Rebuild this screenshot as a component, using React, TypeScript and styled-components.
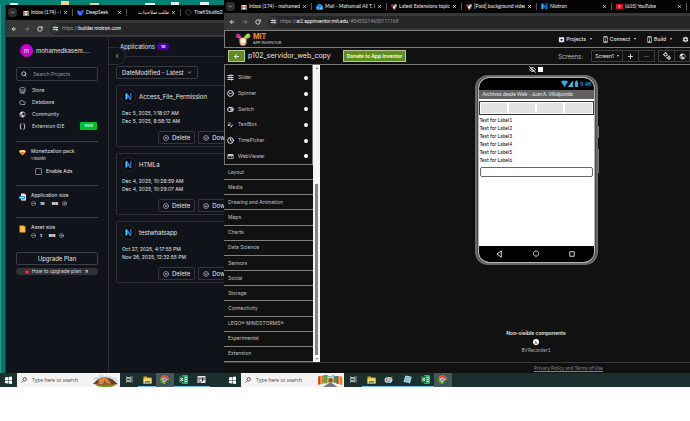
import React from "react";
import styled, { createGlobalStyle } from "styled-components";
import {
  ArrowLeft, ArrowRight, RotateCw, Search, Store, Cloud, Braces, ChevronLeft, ChevronDown, X,
  CircleX, CircleArrowDown, CircleMinus, CirclePlus, ArrowUpRight, SlidersHorizontal, CircleChevronDown,
  ToggleRight, Clock, Plus, Minus, EyeOff,
} from "lucide-react";
import { MdPublic, MdSettings, MdArchive, MdEditNote, MdWeb, MdPermDeviceInformation } from "react-icons/md";

const Global = createGlobalStyle`
  *, *::before, *::after { box-sizing: border-box; }
  body { margin: 0; background: #fff; overflow-x: hidden; }
  button, input, select { font: inherit; color: inherit; margin: 0; padding: 0; border: 0; background: none; }
  button { cursor: pointer; }
  svg { display: block; flex: none; }
`;

const ui = `"Inter", "Open Sans", sans-serif`;
const system = `"Open Sans", "Noto Sans", sans-serif`;
const compact = `Lato, Roboto, sans-serif`;

const Screen = styled.div`
  display: grid;
  grid-template-columns: minmax(0, 224fr) minmax(0, 466fr);
  font: 5px/7px ${ui};
  color: #e6e6e6;
  white-space: nowrap;
`;
const Desktop = styled.section`
  display: flex;
  flex-direction: column;
  min-width: 0;
  overflow: hidden;
  background: #007f71;
`;
const Shortcuts = styled.svg`
  width: 100%;
  height: 5px;
`;
const DesktopBody = styled.div`
  flex: 1;
  display: grid;
  grid-template-columns: 6px minmax(0, 1fr);
`;
const DesktopEdge = styled.div`
  background: linear-gradient(90deg, #37998e 0 1px, #00786b 1px 5px, #07443f 5px);
`;
const Browser = styled.div`
  flex: 1;
  display: flex;
  flex-direction: column;
  min-width: 0;
  background: #111;
  overflow: hidden;
`;

/* browser chrome */
const TabStrip = styled.div<{ $h: number }>`
  height: ${(p) => p.$h}px;
  display: flex;
  align-items: center;
  background: #030303;
  overflow: hidden;
  font-family: ${compact};
  color: #f2f2f2;
`;
const TabMenu = styled.button`
  flex: none;
  width: 9px;
  height: 9px;
  margin: 0 2px;
  border-radius: 3px;
  background: #2d2d2d;
  display: grid;
  place-items: center;
`;
const Tab = styled.div<{ $w: number }>`
  flex: 0 0 ${(p) => p.$w}px;
  min-width: 0;
  display: flex;
  align-items: center;
  gap: 2px;
  padding: 0 4px;
`;
const TabTitle = styled.span`
  flex: 1;
  min-width: 0;
  overflow: hidden;
`;
const TabClose = styled.button`
  display: grid;
  place-items: center;
`;
const Toolbar = styled.div`
  height: 17px;
  display: flex;
  align-items: center;
  gap: 7px;
  padding: 0 0 0 5px;
  background: #363738;
  color: #ddd;
`;
const NavButton = styled.button<{ $dim?: boolean }>`
  color: ${(p) => (p.$dim ? "#888" : "#fff")};
`;
const Address = styled.label`
  flex: 1;
  min-width: 0;
  height: 12px;
  display: flex;
  align-items: center;
  overflow: hidden;
  border-radius: 6px 0 0 6px;
  background: #242628;
  color: #999;
  font-family: Roboto, sans-serif;
  input { color: #fff; field-sizing: content; outline: 0; }
`;
const SiteInfo = styled.span`
  width: 9px;
  height: 9px;
  margin: 0 2px 0 1px;
  border-radius: 50%;
  background: #38393a;
  display: grid;
  place-items: center;
`;

/* builder */
const Builder = styled.div`
  flex: 1;
  display: grid;
  grid-template-columns: 103px minmax(0, 1fr);
  background: #10131a;
`;
const Sidebar = styled.aside`
  border-right: 1px solid #2c2e34;
  padding: 7px 10px 0;
  display: flex;
  flex-direction: column;
`;
const Account = styled.div`
  display: flex;
  align-items: center;
  gap: 3px;
  padding: 0 4px;
  font-size: 6px;
  line-height: 13px;
`;
const Avatar = styled.span`
  width: 13px;
  height: 13px;
  border-radius: 50%;
  background: #c800d0;
  text-align: center;
`;
const SearchField = styled.label`
  display: flex;
  align-items: center;
  gap: 6px;
  height: 14px;
  margin: 10px 0 3px;
  padding: 0 4px;
  border: 1px solid #373a40;
  border-radius: 2px;
  input { width: 100%; min-width: 0; outline: 0; }
  input::placeholder { color: #92959a; opacity: 1; }
`;
const SideLinks = styled.nav`
  padding-bottom: 9px;
`;
const SideLink = styled.a`
  display: flex;
  align-items: center;
  gap: 6px;
  height: 12px;
  padding: 0 1px 0 3px;
  color: #dcdcdc;
  text-decoration: none;
`;
const NewTag = styled.span`
  margin-left: auto;
  padding: 0 4px;
  border-radius: 1px;
  background: #00c22f;
  color: #fff;
  font-size: 4px;
  line-height: 8px;
`;
const Plan = styled.section<{ $h: number }>`
  height: ${(p) => p.$h}px;
  border-top: 1px solid #3d4047;
  padding: 6px 3px 0;
  display: grid;
  grid-template-columns: 7px 1fr;
  column-gap: 5px;
  align-content: start;
  > svg { margin-top: 1px; grid-row: span 2; }
`;
const PlanNote = styled.span`
  grid-column: 2;
  font-size: 4px;
`;
const Check = styled.label`
  grid-column: 2;
  display: flex;
  align-items: center;
  gap: 4px;
  margin: 6px 0 0 4px;
  input {
    appearance: none;
    width: 7px;
    height: 7px;
    border: 1px solid #777b82;
    border-radius: 1px;
  }
`;
const Stepper = styled.div`
  grid-column: 2;
  display: flex;
  align-items: center;
  gap: 4px;
  margin-top: 1px;
  font-size: 4px;
  font-weight: 700;
  b:last-of-type { margin-left: 3px; }
`;
const Upgrade = styled.button`
  height: 13px;
  margin-top: 3px;
  border: 1px solid #3b3e45;
  border-radius: 2px;
  font-size: 6px;
`;
const HowTo = styled.a`
  display: flex;
  align-items: center;
  justify-content: center;
  gap: 3px;
  height: 7px;
  margin-top: 3px;
  border-radius: 4px;
  background: #303236;
  color: #ddd;
  text-decoration: none;
`;
const Main = styled.main`
  position: relative;
  min-width: 0;
  overflow: hidden;
  padding: 0 0 0 7px;
`;
const MainHead = styled.header`
  height: 20px;
  margin-left: -7px;
  padding: 6px 0 0 11px;
  border-bottom: 1px solid #2c2e34;
  display: flex;
  align-items: flex-start;
  gap: 2px;
  font-size: 6px;
`;
const Count = styled.span`
  padding: 0 4px;
  border-radius: 4px;
  background: #4900b0;
  color: #fff;
  font-size: 4px;
  font-weight: 700;
`;
const Collapse = styled.button`
  position: absolute;
  left: -1px;
  top: 10px;
  width: 18px;
  height: 18px;
  border: 1px solid #2c2e34;
  border-left: 0;
  border-radius: 0 9px 9px 0;
  background: #10131a;
  display: grid;
  place-items: center;
`;
const Sort = styled.label`
  display: flex;
  align-items: center;
  width: 82px;
  height: 13px;
  margin-top: 9px;
  padding: 0 5px;
  border: 1px solid #373a40;
  border-radius: 2px;
  font-size: 6px;
  select { appearance: none; flex: 1; min-width: 0; height: 11px; outline: 0; }
`;
const Card = styled.article`
  height: 62px;
  margin: 6px 0;
  padding: 3px 0 2px 4px;
  border: 1px solid #2c2e34;
  border-right: 0;
  border-radius: 2px 0 0 2px;
  display: flex;
  flex-direction: column;
`;
const CardHead = styled.h3`
  display: flex;
  align-items: center;
  gap: 3px;
  margin: 0 0 5px;
  font-size: 6px;
  font-weight: 400;
`;
const CardDate = styled.span`
  padding-left: 1px;
  line-height: 8px;
`;
const CardActions = styled.div`
  display: flex;
  gap: 3px;
  margin: auto 0 0 37px;
`;
const CardButton = styled.button<{ $open?: boolean }>`
  flex: none;
  display: flex;
  align-items: center;
  gap: 3px;
  height: 13px;
  padding: 0 ${(p) => (p.$open ? 0 : 4)}px 0 4px;
  border: 1px solid #34363c;
  border-right-width: ${(p) => (p.$open ? 0 : 1)}px;
  border-radius: 2px;
  font-size: 6px;
`;

/* app inventor */
const Inventor = styled.div`
  flex: 1;
  display: flex;
  flex-direction: column;
  background: #111;
`;
const TopBar = styled.header`
  display: flex;
  align-items: center;
  height: 18px;
  padding: 0 1px 0 10px;
  border: 1px solid #7d7d7d;
  border-right: 0;
`;
const Logo = styled.div`
  display: flex;
  align-items: center;
  gap: 2px;
  margin-right: auto;
`;
const LogoText = styled.div`
  display: flex;
  flex-direction: column;
  font: 700 7px/6px ${ui};
  color: #f79428;
  small { font: 400 4px/5px ${compact}; color: #ccc; }
`;
const MenuButton = styled.button`
  display: flex;
  align-items: center;
  gap: 1px;
  margin-right: 10px;
  font-weight: 500;
`;
const Caret = styled.i<{ $up?: boolean; $dark?: boolean }>`
  margin-left: ${(p) => (p.$dark ? 0 : 3)}px;
  border: 1px solid transparent;
  border-top: 2px solid ${(p) => (p.$dark ? "#555" : "#ddd")};
  border-bottom: 0;
  transform: ${(p) => (p.$up ? "rotate(180deg)" : "none")};
`;
const ProjectBar = styled.div`
  display: flex;
  align-items: center;
  height: 17px;
  padding-left: 4px;
  border-bottom: 1px solid #777;
`;
const GreenButton = styled.button<{ $pad: number }>`
  height: 12px;
  padding: 0 ${(p) => p.$pad}px;
  border: 1px solid #b9c79d;
  background: #5f8e1c;
  color: #fff;
  font-weight: 600;
`;
const ProjectName = styled.h1`
  margin: 0 12px 0 3px;
  font: 400 7px/10px ${ui};
`;
const ScreensLabel = styled.span`
  margin: 0 8px 0 auto;
  font-size: 6px;
  color: #bbb;
`;
const Group = styled.div`
  display: flex;
  height: 12px;
  margin-right: 3px;
  &:last-child { margin-right: 0; }
`;
const GroupButton = styled.button<{ $w: number }>`
  width: ${(p) => p.$w}px;
  border: 1px solid #3c3c3c;
  border-left-width: 0;
  display: flex;
  align-items: center;
  justify-content: center;
  &:first-child { border-left-width: 1px; }
`;
const Workspace = styled.div`
  display: grid;
  grid-template-columns: 89px 7px minmax(0, 1fr);
  min-height: 298px;
  border-bottom: 1px solid #383838;
`;
const Palette = styled.nav`
  display: flex;
  flex-direction: column;
  color: #c4c4c4;
`;
const Components = styled.div`
  height: 100px;
  padding: 5px 4px 0 2px;
  border: 1px solid #777;
  border-top: 0;
  display: flex;
  flex-direction: column;
`;
const ComponentItem = styled.button`
  flex: 1;
  display: flex;
  align-items: center;
  gap: 4px;
  svg { color: #fff; }
`;
const Help = styled.span`
  width: 4px;
  height: 4px;
  margin-left: auto;
  border-radius: 50%;
  background: #fff;
`;
const Category = styled.button`
  flex: 1;
  padding-left: 4px;
  border-bottom: 1px solid #808080;
  text-align: left;
`;
const Scroll = styled.div`
  background: #f4f4f4;
  display: flex;
  flex-direction: column;
  align-items: center;
  padding: 2px 0;
`;
const Thumb = styled.div`
  width: 3px;
  height: 171px;
  margin: auto 0 3px;
  background: #858585;
`;
const Viewer = styled.div`
  display: flex;
  flex-direction: column;
  align-items: center;
  padding-left: 62px;
`;
const ViewerTools = styled.div`
  display: flex;
  align-items: center;
  gap: 2px;
  height: 9px;
  margin-bottom: 1px;
`;
const Blank = styled.input`
  appearance: none;
  width: 5px;
  height: 5px;
  && { background: #fff; }
`;
const Phone = styled.div`
  position: relative;
  width: 123px;
  height: 190px;
  padding: 0 1px;
  border: 2px solid #6a6a6a;
  border-radius: 13px;
  background: #4a4a4a;
`;
const SideKey = styled.i<{ $top: number; $h: number }>`
  position: absolute;
  right: -3px;
  top: ${(p) => p.$top}px;
  width: 1px;
  height: ${(p) => p.$h}px;
  background: #777;
`;
const PhoneScreen = styled.div`
  height: 100%;
  display: flex;
  flex-direction: column;
  overflow: hidden;
  border: 1px solid #b5b5b5;
  border-radius: 11px;
  background: #fff;
  color: #000;
`;
const Status = styled.div`
  height: 12px;
  display: flex;
  align-items: center;
  justify-content: flex-end;
  gap: 2px;
  padding-right: 2px;
  background: #000;
  color: #35b0e0;
  font: 6px/8px Roboto, sans-serif;
`;
const AppTitle = styled.div`
  height: 9px;
  padding-left: 4px;
  background: #626262;
  color: #eee;
  font-family: ${compact};
  line-height: 9px;
`;
const ButtonRow = styled.div`
  display: grid;
  grid-template-columns: repeat(4, 1fr);
  gap: 2px;
  height: 14px;
  margin: 2px 0 1px;
  padding: 1px;
  border: 1px solid #333;
  button { background: #e2e2e2; }
`;
const AppLabel = styled.span`
  padding-left: 1px;
  font: 5px/8px ${compact};
`;
const AppInput = styled.input`
  height: 10px;
  margin: 3px 1px;
  border-radius: 2px;
  && { border: 1px solid #666; }
`;
const AndroidNav = styled.div`
  display: flex;
  align-items: center;
  justify-content: space-around;
  height: 16px;
  margin-top: auto;
  padding: 0 4px;
  background: #000;
`;
const Hidden = styled.div`
  display: flex;
  flex-direction: column;
  align-items: center;
  gap: 2px;
  margin-top: auto;
  padding-bottom: 8px;
  strong { font-weight: 600; }
  span { color: #aaa; font-family: ${compact}; }
`;
const Footer = styled.footer`
  height: 10px;
  padding: 2px 0 0 223px;
  text-align: center;
  font-family: ${compact};
  a { color: #858585; }
`;

/* taskbar */
const Taskbar = styled.div`
  height: 14px;
  display: flex;
  align-items: stretch;
  padding-left: 5px;
  background: #19302f;
`;
const TaskButton = styled.button<{ $open?: boolean; $active?: boolean }>`
  flex: none;
  width: 18px;
  display: grid;
  place-items: center;
  background: ${(p) => (p.$active ? "#44585a" : "none")};
  border-bottom: 1px solid ${(p) => (p.$open ? "#76b9ed" : "transparent")};
`;
const TaskSearch = styled.label`
  display: flex;
  align-items: center;
  width: 103px;
  gap: 5px;
  padding: 0 1px 0 4px;
  background: #f3f3f3;
  color: #333;
  font-family: ${system};
  input { flex: 1; min-width: 0; outline: 0; }
  input::placeholder { color: #444; opacity: 1; }
`;
const StartButton = styled.button`
  flex: none;
  margin-right: 5px;
`;

/* drawings */
const Gmail = () => (
  <svg width="6" height="6" viewBox="0 0 12 12">
    <path d="M0 2h12v9H0z" fill="#fff" />
    <path d="M0 11V1l6 5 6-5v10H9V6L6 8 3 6v5z" fill="#ea4335" />
    <path d="M0 4v7h3V6z" fill="#4285f4" /><path d="M12 4v7H9V6z" fill="#34a853" />
  </svg>
);
const DeepSeek = () => (
  <svg width="7" height="7" viewBox="0 0 12 12">
    <path d="M1 2c-2 5 1 9 5 9 2 0 3 0 4-1L8 8c2-1 3-3 4-6-2 1-3 0-4-1 0 2 0 3-1 4C5 3 3 3 1 2z" fill="#426cff" />
  </svg>
);
const Niotron = ({ size = 7 }: { size?: number }) => (
  <svg width={size} height={size} viewBox="0 0 14 14">
    <path d="M1 1l4 2v8l-4 2z" fill="#3dc3ff" /><path d="M1 1h3l9 12h-3z" fill="#1689ee" />
    <path d="M9 1l4-1v13L9 8z" fill="#1668d8" />
  </svg>
);
const NiotronBadge = () => (
  <svg width="15" height="15" viewBox="0 0 30 30">
    <circle cx="15" cy="15" r="14" fill="#0a0b0f" stroke="#33353b" strokeWidth="1.5" />
    <path d="M9 8l4 3v8l-4 3z" fill="#4fd0ff" /><path d="M9 8h3l9 14h-3z" fill="#2b9cf2" />
    <path d="M18 9l3-2v15l-3-5z" fill="#1668d8" />
  </svg>
);
const OutlookMail = () => (
  <svg width="7" height="7" viewBox="0 0 14 14">
    <path d="M2 5l5-4 6 4v8H2z" fill="#1490df" /><path d="M2 6l6 4 5-4v7H2z" fill="#50d0ff" />
    <path d="M0 6h7v7H0z" fill="#0a5cc0" /><circle cx="3.500" cy="9.500" r="1.800" fill="none" stroke="#fff" />
  </svg>
);
const Community = () => (
  <svg width="6" height="6" viewBox="0 0 12 12">
    <circle cx="3" cy="3" r="3" fill="#b01b86" /><circle cx="9" cy="3" r="3" fill="#a5cf42" />
    <path d="M3 6h7l-2 5H5z" fill="#f8a23c" /><circle cx="6" cy="6" r="2" fill="#fff" />
  </svg>
);
const YouTube = ({ size = 7 }: { size?: number }) => (
  <svg width={size} height={size} viewBox="0 0 14 14">
    <rect y="2" width="14" height="10" rx="2" fill="#f20d26" /><path d="M5.500 4.500v5l4-2.500z" fill="#fff" />
  </svg>
);
const DottedRing = () => (
  <svg width="7" height="7" viewBox="0 0 14 14"><circle cx="7" cy="7" r="5" fill="none" stroke="#8b8b8b" strokeWidth="1.500" strokeDasharray="2 1" /></svg>
);
const Tune = () => (
  <svg width="5" height="5" viewBox="0 0 10 10" stroke="#fff" strokeWidth="1.500" fill="none">
    <path d="M0 3h3M6 3h4M0 7h5M8 7h2" /><circle cx="4" cy="3" r="1.300" /><circle cx="7" cy="7" r="1.300" />
  </svg>
);
const Gears = () => (
  <svg width="8" height="8" viewBox="0 0 16 16" fill="none" stroke="#fff">
    <circle cx="5" cy="5" r="3" strokeWidth="2" /><circle cx="12" cy="12" r="2.500" strokeWidth="2" />
    <path d="M5 0v2M0 5h2M9 7l1 2M12 7v2M6 12h2" strokeWidth="1.500" />
  </svg>
);
const Bee = () => (
  <svg width="16" height="13" viewBox="0 0 48 40">
    <path d="M23 17C16 1 5-2 2 6s7 13 19 13z" fill="#a71d85" /><path d="M25 17C32 1 43-2 46 6s-7 13-19 13z" fill="#97c93d" />
    <path d="M9 3l5 12M3 10l15 6" stroke="#d66dbb" strokeWidth="2" /><path d="M39 3l-5 12M45 10l-15 6" stroke="#d2ed8b" strokeWidth="2" />
    <path d="M13 19c3-6 19-6 22 0v10c-2 14-20 14-22 0z" fill="#f0933a" />
    <circle cx="24" cy="23" r="8" fill="#fff3e4" /><path d="M15 30h18M17 35h14" stroke="#fff" strokeWidth="2" />
  </svg>
);
const Gem = () => (
  <svg width="7" height="7" viewBox="0 0 14 14"><path d="M3 2h8l3 4-7 7-7-7z" fill="#f6a13a" /><path d="M3 2h8l3 4H0z" fill="#ffd792" /><path d="M5 6h4l-2 6z" fill="#e36e22" /></svg>
);
const AppBox = () => (
  <svg width="7" height="8" viewBox="0 0 14 16"><path d="M4 1h7l3 3v11H4z" fill="#e8eef5" /><path d="M11 1l3 3h-3z" fill="#f5a33a" /><rect y="6" width="12" height="6" rx="1" fill="#2492ea" /><path d="M2 9h8" stroke="#fff" strokeWidth="2" /><path d="M6 13h7v2H6z" fill="#f08a43" /></svg>
);
const AssetBox = () => (
  <svg width="7" height="8" viewBox="0 0 14 16"><path d="M1 1h9l3 3v11H1z" fill="#f9a91e" /><path d="M3 3h6l2 3v7H3z" fill="#ffc24a" /></svg>
);
const Windows = () => (
  <svg width="7" height="14" viewBox="0 0 14 28"><path d="M0 9l6-1v6H0zM7 8l7-1v7H7zM0 15h6v6l-6-1zM7 15h7v7l-7-1z" fill="#fff" /></svg>
);
const TaskLens = () => (
  <svg width="6" height="6" viewBox="0 0 12 12" fill="none" stroke="#333" strokeWidth="1.500"><circle cx="7.500" cy="4.500" r="3.500" /><path d="M5 7l-4 4" /></svg>
);
const Hill = () => (
  <svg width="27" height="13" viewBox="0 0 81 39">
    <path d="M3 17c0-9 8-12 14-8 4-9 17-8 21-1 6-6 20-5 24 3 12-2 17 4 15 12z" fill="#cfdfe8" />
    <ellipse cx="41" cy="33" rx="29" ry="6" fill="#5b9f27" />
    <path d="M2 29c9-4 16-16 24-18l12-2 14 4c8 1 16 12 27 17-18 5-56 5-77-1z" fill="#9d5c26" />
    <path d="M26 11l12-2 8 8 10 13-13-4-5-9-6 13-17 1z" fill="#d08b4c" /><path d="M15 18L5 29l17-1z" fill="#673517" />
    <path d="M49 12l10 18 17-1-14-12z" fill="#6f3d1a" />
  </svg>
);
const Festival = () => (
  <svg width="25" height="13" viewBox="0 0 75 39">
    <path d="M0 8l19-4v24l-19 5z" fill="#ed7730" /><path d="M53 5l20 3v25l-20-5z" fill="#ef7b27" />
    <path d="M4 7v24M58 7v22" stroke="#c43d27" strokeWidth="4" /><path d="M10 8v20M65 8v22" stroke="#f5b547" strokeWidth="3" />
    <path d="M18 3h11v25H18z" fill="#59a64c" /><path d="M47 6h10v20H47z" fill="#438e7b" />
    <path d="M27 12h22l-3 15H30z" fill="#d8a33e" /><circle cx="38" cy="19" r="6" fill="#ad422b" />
    <path d="M15 39l22-14 22 14z" fill="#77788d" /><path d="M27 5l9 5 12-6" fill="none" stroke="#51a9ce" strokeWidth="3" />
  </svg>
);
const TaskView = () => (
  <svg width="7" height="7" viewBox="0 0 14 14" fill="none" stroke="#d4dddd" strokeWidth="1.500"><path d="M1 1v2h8V1M1 13v-2h8v2M1 5h8v4H1zM12 1v12" /></svg>
);
const Folder = () => (
  <svg width="9" height="8" viewBox="0 0 18 16"><path d="M1 1h6l2 2h8v12H1z" fill="#e9a820" /><path d="M1 5h16v10H1z" fill="#ffd968" /><path d="M4 10h10v5h-3v-2H7v2H4z" fill="#2c91d4" /></svg>
);
const Chrome = () => (
  <svg width="10" height="10" viewBox="0 0 20 20">
    <circle cx="9" cy="9" r="8" fill="#fbbc05" /><path d="M9 9L2 5a8 8 0 0 1 15 4z" fill="#ea4335" /><path d="M2 5l7 12A8 8 0 0 1 2 5z" fill="#34a853" />
    <circle cx="9" cy="9" r="4" fill="#fff" /><circle cx="9" cy="9" r="3" fill="#4285f4" /><circle cx="15" cy="15" r="4.500" fill="#174f60" /><path d="M12 15h6" stroke="#74b5b0" />
  </svg>
);
const Excel = () => (
  <svg width="9" height="9" viewBox="0 0 18 18"><path d="M6 1h11v16H6z" fill="#e3f1e7" /><path d="M11 3h5M11 7h5M11 11h5M11 15h5" stroke="#21a366" strokeWidth="2" /><path d="M0 3l11-2v16L0 15z" fill="#107c41" /><path d="M3 6l5 6M8 6l-5 6" stroke="#fff" strokeWidth="2" /></svg>
);
const PianoApp = () => (
  <svg width="9" height="9" viewBox="0 0 18 18"><rect x="1" y="2" width="16" height="14" rx="1" fill="#e8e8e8" /><path d="M4 5v6M8 5v4M11 5v8M14 5v5M3 14h5" stroke="#222" strokeWidth="2" /></svg>
);
const Paint = () => (
  <svg width="10" height="9" viewBox="0 0 20 18"><ellipse cx="9" cy="10" rx="8" ry="6" fill="#bcdced" /><circle cx="5" cy="10" r="2" fill="#db4037" /><circle cx="9" cy="13" r="2" fill="#4598d6" /><circle cx="7" cy="6" r="1.500" fill="#44a35b" /><path d="M18 1L9 10l3 2z" fill="#e8873a" /></svg>
);
const Notepad = () => (
  <svg width="9" height="9" viewBox="0 0 18 18"><path d="M5 1l11 2-3 13L1 14z" fill="#a9d9ef" /><path d="M6 5l8 1M5 8l8 1M4 11l8 1" stroke="#4389ac" /><path d="M16 3l1 2-3 12-3-1 2-1z" fill="#eceff0" /></svg>
);
const Divider = () => <svg width="1" height="7" viewBox="0 0 1 7"><path d="M0 0v7" stroke="#555" strokeWidth="2" /></svg>;

type TabInfo = { icon: React.ReactNode; title: string; rtl?: boolean };
const ChromeBars = ({ tabs, w, h, host, path }: { tabs: TabInfo[]; w: number; h: number; host: string; path?: string }) => (
  <>
    <TabStrip $h={h}>
      <TabMenu aria-label="Search tabs"><ChevronDown size={5} strokeWidth={3} /></TabMenu>
      {tabs.map((t, i) => (
        <React.Fragment key={i}>
          <Tab $w={w - 1}>
            {t.icon}
            <TabTitle dir={t.rtl ? "rtl" : undefined}>{t.title}</TabTitle>
            <TabClose aria-label="Close tab"><X size={5} strokeWidth={3} /></TabClose>
          </Tab>
          <Divider />
        </React.Fragment>
      ))}
    </TabStrip>
    <Toolbar>
      <NavButton aria-label="Back"><ArrowLeft size={6} strokeWidth={3} /></NavButton>
      <NavButton aria-label="Forward" $dim><ArrowRight size={6} strokeWidth={3} /></NavButton>
      <NavButton aria-label="Reload"><RotateCw size={6} strokeWidth={3} /></NavButton>
      <Address>
        <SiteInfo><Tune /></SiteInfo>
        https://<input aria-label="Address" defaultValue={host} />{path}
      </Address>
    </Toolbar>
  </>
);

const leftTabs: TabInfo[] = [
  { icon: <Gmail />, title: "Inbox (174) - r" },
  { icon: <DeepSeek />, title: "DeepSeek" },
  { icon: null, title: "طلب صلاحيات", rtl: true },
  { icon: <DottedRing />, title: "TheKStudio25" },
];
const rightTabs: TabInfo[] = [
  { icon: <Gmail />, title: "Inbox (174) - mohamedk" },
  { icon: <OutlookMail />, title: "Mail - Mohamad Ali T. K" },
  { icon: <Community />, title: "Latest Extensions topics" },
  { icon: <Community />, title: "[Paid] background video" },
  { icon: <Niotron />, title: "Niotron" },
  { icon: <YouTube />, title: "(605) YouTube" },
  { icon: <Community />, title: "" },
];
const projects = [
  { name: "Access_File_Permission", dates: ["Dec 5, 2025, 1:18:07 AM", "Dec 5, 2025, 8:58:12 AM"] },
  { name: "HTMLa", dates: ["Dec 4, 2025, 10:28:59 AM", "Dec 4, 2025, 10:29:07 AM"] },
  { name: "testwhatsapp", dates: ["Oct 27, 2025, 4:17:55 PM", "Nov 26, 2025, 12:32:55 PM"] },
];
const components: [React.ReactNode, string][] = [
  [<SlidersHorizontal size={7} strokeWidth={3} />, "Slider"],
  [<CircleChevronDown size={7} strokeWidth={3} />, "Spinner"],
  [<ToggleRight size={7} strokeWidth={3} />, "Switch"],
  [<MdEditNote size={7} />, "TextBox"],
  [<Clock size={7} strokeWidth={3} />, "TimePicker"],
  [<MdWeb size={7} />, "WebViewer"],
];
const categories = ["Layout", "Media", "Drawing and Animation", "Maps", "Charts", "Data Science", "Sensors", "Social", "Storage", "Connectivity", "LEGO® MINDSTORMS®", "Experimental", "Extension"];

const SizeStepper = ({ value }: { value: string }) => (
  <Stepper>
    <button aria-label="Decrease"><CircleMinus size={5} strokeWidth={2} /></button>
    <b>{value}</b><b>MB</b>
    <button aria-label="Increase"><CirclePlus size={5} strokeWidth={2} /></button>
  </Stepper>
);

export default function App() {
  return (
    <>
      <Global />
      <Screen>
        <Desktop>
          <Shortcuts viewBox="0 0 224 5" preserveAspectRatio="xMinYMin slice">
            <path d="M0 0h224v5H0z" fill="#008174" />
            <path d="M10 3h8v2h-8zM145 3h10v2h-10zM200 2h9v3h-9zM171 2h8v3h-8z" fill="#e5eeec" />
            <path d="M61 1h8v4h-8zM90 3h9v2h-9z" fill="#ecd583" />
          </Shortcuts>
          <DesktopBody>
            <DesktopEdge />
            <Browser>
              <ChromeBars tabs={leftTabs} w={54} h={15} host="builder.niotron.com" />
              <Builder>
                <Sidebar>
                  <Account><Avatar>m</Avatar>mohamedkasem....</Account>
                  <SearchField><Search size={6} strokeWidth={3} /><input aria-label="Search projects" placeholder="Search Projects" /></SearchField>
                  <SideLinks>
                    <SideLink href="#store"><Store size={7} />Store</SideLink>
                    <SideLink href="#database"><Cloud size={7} />Database</SideLink>
                    <SideLink href="#community"><MdPublic size={7} />Community</SideLink>
                    <SideLink href="#extension"><Braces size={7} strokeWidth={3} />Extension IDE<NewTag>New</NewTag></SideLink>
                  </SideLinks>
                  <Plan $h={44}>
                    <Gem /><span>Monetization pack</span><PlanNote>1 month</PlanNote>
                    <Check><input type="checkbox" />Enable Ads</Check>
                  </Plan>
                  <Plan $h={32}><AppBox /><span>Application size</span><SizeStepper value="10" /></Plan>
                  <Plan $h={32}><AssetBox /><span>Asset size</span><SizeStepper value="1" /></Plan>
                  <Upgrade>Upgrade Plan</Upgrade>
                  <HowTo href="#help"><YouTube size={4} />How to upgrade plan<ArrowUpRight size={5} strokeWidth={3} /></HowTo>
                </Sidebar>
                <Main>
                  <MainHead>Applications<Count>10</Count></MainHead>
                  <Collapse aria-label="Collapse sidebar"><ChevronLeft size={6} strokeWidth={3} /></Collapse>
                  <Sort>
                    <select aria-label="Sort by"><option>DateModified - Latest</option></select>
                    <ChevronDown size={5} strokeWidth={3} />
                  </Sort>
                  {projects.map((p) => (
                    <Card key={p.name}>
                      <CardHead><NiotronBadge />{p.name}</CardHead>
                      {p.dates.map((d) => <CardDate key={d}>{d}</CardDate>)}
                      <CardActions>
                        <CardButton><CircleX size={6} />Delete</CardButton>
                        <CardButton $open aria-label="Download"><CircleArrowDown size={6} />Dow</CardButton>
                      </CardActions>
                    </Card>
                  ))}
                </Main>
              </Builder>
            </Browser>
          </DesktopBody>
          <Taskbar>
            <StartButton aria-label="Start"><Windows /></StartButton>
            <TaskSearch><TaskLens /><input aria-label="Taskbar search" placeholder="Type here to search" /><Hill /></TaskSearch>
            <TaskButton aria-label="Task view"><TaskView /></TaskButton>
            <TaskButton $open aria-label="File Explorer"><Folder /></TaskButton>
            <TaskButton $active aria-label="Chrome"><Chrome /></TaskButton>
            <TaskButton $open aria-label="Excel"><Excel /></TaskButton>
            <TaskButton $open aria-label="Piano"><PianoApp /></TaskButton>
          </Taskbar>
        </Desktop>

        <Desktop>
          <Browser>
            <ChromeBars tabs={rightTabs} w={75} h={13} host="ai2.appinventor.mit.edu" path="/#5455214655111168" />
            <Inventor>
              <TopBar>
                <Logo><Bee /><LogoText>MIT<small>APP INVENTOR</small></LogoText></Logo>
                <MenuButton><MdArchive size={7} />Projects<Caret /></MenuButton>
                <MenuButton><MdPermDeviceInformation size={7} />Connect<Caret /></MenuButton>
                <MenuButton><MdPermDeviceInformation size={7} />Build<Caret /></MenuButton>
                <button aria-label="Settings"><MdSettings size={7} /></button>
              </TopBar>
              <ProjectBar>
                <GreenButton $pad={4} aria-label="Back to projects"><ArrowLeft size={7} strokeWidth={3} /></GreenButton>
                <ProjectName>p102_servidor_web_copy</ProjectName>
                <GreenButton $pad={3}>Donate to App Inventor</GreenButton>
                <ScreensLabel>Screens:</ScreensLabel>
                <Group>
                  <GroupButton $w={32}>Screen1<Caret /></GroupButton>
                  <GroupButton $w={16} aria-label="Add screen"><Plus size={7} strokeWidth={3} /></GroupButton>
                  <GroupButton $w={16} aria-label="Remove screen"><Minus size={7} color="#777" /></GroupButton>
                </Group>
                <Group>
                  <GroupButton $w={17} aria-label="Project settings"><Gears /></GroupButton>
                  <GroupButton $w={15} aria-label="Publish"><MdPublic size={7} /></GroupButton>
                </Group>
              </ProjectBar>
              <Workspace>
                <Palette>
                  <Components>
                    {components.map(([icon, name]) => <ComponentItem key={name}>{icon}{name}<Help /></ComponentItem>)}
                  </Components>
                  {categories.map((c) => <Category key={c}>{c}</Category>)}
                </Palette>
                <Scroll><Caret $dark $up /><Thumb /><Caret $dark /></Scroll>
                <Viewer>
                  <ViewerTools><EyeOff size={7} strokeWidth={3} /><Blank type="checkbox" aria-label="Display hidden components" /></ViewerTools>
                  <Phone>
                    <SideKey $top={49} $h={12} /><SideKey $top={72} $h={24} />
                    <PhoneScreen>
                      <Status>
                        <svg width="17" height="8" viewBox="0 0 34 16" fill="#35b0e0"><path d="M0 3c4-3 10-3 14 0l-7 11zM24 1v13H13zM28 3h2V1h2v2h2v11h-6z" /></svg>
                        9:48
                      </Status>
                      <AppTitle>Archivos desde Web - Juan A. Villalpando</AppTitle>
                      <ButtonRow>{[1, 2, 3, 4].map((n) => <button key={n} aria-label={`Button ${n}`} />)}</ButtonRow>
                      {[1, 2, 3, 4, 5, 6].map((n) => <AppLabel key={n}>Text for Label{n}</AppLabel>)}
                      <AppInput aria-label="Text" />
                      <AndroidNav>
                        {["M6 1v7L1 4.500z", "M4.500 1a3 3 0 1 0 .1 0z", "M2 2h5v5H2z"].map((d) => (
                          <svg key={d} width="8" height="8" viewBox="0 0 9 9" fill="none" stroke="#eee"><path d={d} /></svg>
                        ))}
                      </AndroidNav>
                    </PhoneScreen>
                  </Phone>
                  <Hidden>
                    <strong>Non-visible components</strong>
                    <svg width="6" height="6" viewBox="0 0 12 12"><circle cx="6" cy="6" r="6" fill="#fff" /><path d="M3 7l2-3 2 2 2 2z" fill="#a34530" /><path d="M3 9h6" stroke="#555" /></svg>
                    <span>BVRecorder1</span>
                  </Hidden>
                </Viewer>
              </Workspace>
              <Footer><a href="#privacy">Privacy Policy and Terms of Use</a></Footer>
            </Inventor>
          </Browser>
          <Taskbar>
            <StartButton aria-label="Start"><Windows /></StartButton>
            <TaskSearch><TaskLens /><input aria-label="Taskbar search" placeholder="Type here to search" /><Festival /></TaskSearch>
            <TaskButton aria-label="Task view"><TaskView /></TaskButton>
            <TaskButton $open aria-label="File Explorer"><Folder /></TaskButton>
            <TaskButton $open aria-label="Paint"><Paint /></TaskButton>
            <TaskButton $open aria-label="Notepad"><Notepad /></TaskButton>
            <TaskButton $open aria-label="Excel"><Excel /></TaskButton>
            <TaskButton $active aria-label="Chrome"><Chrome /></TaskButton>
          </Taskbar>
        </Desktop>
      </Screen>
    </>
  );
}
